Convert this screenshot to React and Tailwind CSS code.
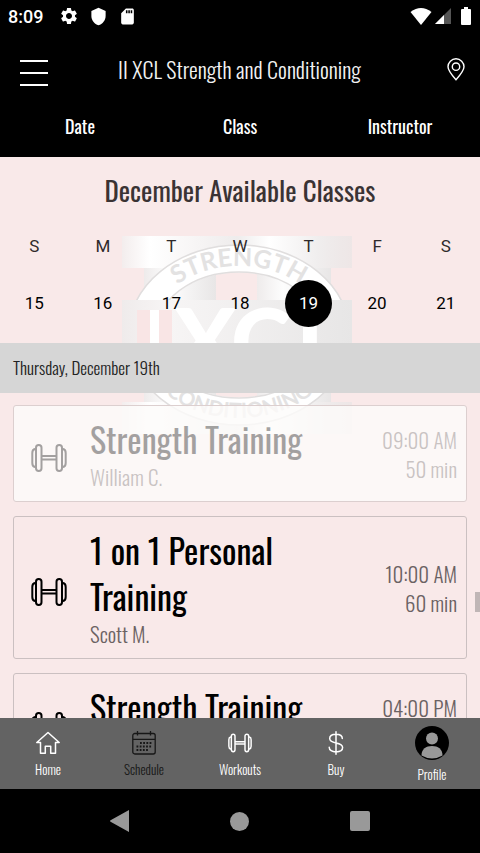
import React from 'react';
import { MdSettings, MdShield, MdSdCard } from 'react-icons/md';

const weekDays = [
    { label: 'S', date: 15 },
    { label: 'M', date: 16 },
    { label: 'T', date: 17 },
    { label: 'W', date: 18 },
    { label: 'T', date: 19, selected: true },
    { label: 'F', date: 20 },
    { label: 'S', date: 21 },
];

const classes = [
    { name: 'Strength Training', instructor: 'William C.', time: '09:00 AM', length: '50 min', past: true },
    { name: '1 on 1 Personal Training', instructor: 'Scott M.', time: '10:00 AM', length: '60 min' },
    { name: 'Strength Training', instructor: 'William C.', time: '04:00 PM', length: '50 min' },
];

const Dumbbell = ({ className, strokeWidth = 2 }) => (
    <svg viewBox="0 0 36 28" className={className} fill="none" stroke="currentColor" strokeWidth={strokeWidth} aria-hidden="true">
        <rect x="5" y="1" width="5.5" height="26" rx="2.7" />
        <rect x="25.5" y="1" width="5.5" height="26" rx="2.7" />
        <path d="M5 5H4Q1.3 5.5 1.3 9V19Q1.3 22.5 4 23H5M31 5H32Q34.7 5.5 34.7 9V19Q34.7 22.5 32 23H31M10.5 12H25.5M10.5 15.5H25.5" />
    </svg>
);

const HomeIcon = () => (
    <svg viewBox="0 0 24 24" className="w-6 h-6" fill="none" stroke="currentColor" strokeWidth="1.5" strokeLinejoin="round" aria-hidden="true">
        <path d="M12 1.5L.8 11.5H4.5V22.3H9.3V15.3H14.7V22.3H19.5V11.5H23.2Z" />
    </svg>
);

const CalendarIcon = () => (
    <svg viewBox="0 0 24 24" className="w-6 h-6" fill="none" stroke="currentColor" strokeWidth="1.3" aria-hidden="true">
        <rect x=".8" y="2.5" width="22.4" height="20.5" rx="2" />
        <path d="M1 8.3H23M5.5 0V4.5M18.5 0V4.5" />
        <path d="M8 12H20M4.5 15.5H20M4.5 19H16" strokeWidth="1.8" strokeDasharray="1.8 1.4" />
    </svg>
);

const DollarIcon = () => (
    <svg viewBox="0 0 24 24" className="w-6 h-6" fill="none" stroke="currentColor" strokeWidth="1.5" strokeLinecap="round" aria-hidden="true">
        <path d="M12 .8V23.2M18.3 7.5C18.3 4.7 15.8 3.2 12 3.2S5.7 4.8 5.7 7.5C5.7 10.3 8 11.2 12 11.9S18.6 13.7 18.6 16.6C18.6 19.4 15.9 20.9 12 20.9S5.2 19.3 5.2 16.3" />
    </svg>
);

const ProfileIcon = () => (
    <svg viewBox="0 0 34 34" className="w-[34px] h-[34px]" aria-hidden="true">
        <circle cx="17" cy="17" r="17" fill="#000" />
        <circle cx="17" cy="12.5" r="6" fill="#999" />
        <path d="M6.5 29.5C6.5 23 11 20 17 20S27.5 23 27.5 29.5Q17 35.5 6.5 29.5Z" fill="#999" />
    </svg>
);

const Watermark = () => (
    <svg viewBox="0 0 236 200" className="absolute top-[78px] left-0 right-0 mx-auto w-[236px] h-[200px]" aria-hidden="true">
        <defs>
            <linearGradient id="slab">
                <stop offset="0" stopColor="#f3eded" />
                <stop offset=".12" stopColor="#fff" />
                <stop offset=".3" stopColor="#f8f6f6" />
                <stop offset=".5" stopColor="#eeecec" />
                <stop offset=".64" stopColor="#fff" />
                <stop offset=".85" stopColor="#f0eeee" />
                <stop offset="1" stopColor="#e9e5e5" stopOpacity=".7" />
            </linearGradient>
            <linearGradient id="pillar">
                <stop offset="0" stopColor="#eeebeb" />
                <stop offset=".35" stopColor="#fdfdfd" />
                <stop offset="1" stopColor="#e8e6e6" />
            </linearGradient>
            <linearGradient id="band">
                <stop offset="0" stopColor="#efebeb" />
                <stop offset=".2" stopColor="#f7f5f5" />
                <stop offset="1" stopColor="#e7e6e6" />
            </linearGradient>
        </defs>
        <rect x="0" y="1" width="230" height="32" fill="url(#slab)" />
        <rect x="22" y="33" width="72" height="134" fill="url(#pillar)" />
        <rect x="135" y="33" width="74" height="134" fill="url(#pillar)" />
        <rect x="0" y="167" width="230" height="32" fill="url(#slab)" />
        <ellipse cx="117" cy="100" rx="97" ry="76" fill="none" stroke="#fff" strokeWidth="27" />
        <ellipse cx="117" cy="100" rx="111" ry="90" fill="none" stroke="#e0dede" strokeWidth="1.5" />
        <ellipse cx="117" cy="100" rx="84" ry="63" fill="none" stroke="#e0dede" strokeWidth="1.5" />
        <path id="arcTop" d="M27 100A90 69 0 0 1 207 100" fill="none" />
        <path id="arcBottom" d="M13 100A104 83 0 0 0 221 100" fill="none" />
        <g fill="#e3e2e2" fontFamily="Lato, sans-serif" fontWeight="700" textAnchor="middle">
            <text fontSize="25"><textPath href="#arcTop" startOffset="50%">STRENGTH</textPath></text>
            <text fontSize="21"><textPath href="#arcBottom" startOffset="50%">CONDITIONING</textPath></text>
        </g>
        <rect x="0" y="65" width="230" height="80" fill="url(#band)" />
        <path d="M15 75H28V145H15ZM37 75H50V145H37Z" fill="#f9e5e5" />
        <rect x="28" y="75" width="9" height="70" fill="#fff" />
        <g fill="#fff" fontFamily="Lato, sans-serif" fontWeight="900" fontSize="92">
            <text x="52" y="140">X</text>
            <text x="109" y="140">C</text>
            <text x="174" y="140">L</text>
        </g>
    </svg>
);

const ClassCard = ({ item }) => (
    <button
        className={`flex items-center w-full shrink-0 border rounded-[3px] py-[10px] pl-[17px] pr-[9px] text-left ${
            item.past ? 'border-[#dccfcf] bg-[#fdfbfa]/80' : 'border-[#cbc0c1]'
        }`}
    >
        <span className={`flex items-center flex-1 ${item.past ? 'opacity-35' : ''}`}>
            <Dumbbell className="w-9 h-7 mt-2 shrink-0" />
            <span className="flex-1 pl-[23px] pr-14">
                <span className="block text-[34px] leading-[46px] text-black">{item.name}</span>
                <span className="block text-[21px] leading-[29px] font-light text-[#6b6263]">{item.instructor}</span>
            </span>
            <span className="text-right text-[21px] leading-[29px] font-light text-[#6b6263] whitespace-nowrap">
                <span className="block">{item.time}</span>
                <span className="block">{item.length}</span>
            </span>
        </span>
    </button>
);

const NavItem = ({ icon, label, active }) => (
    <a href="#" className={`flex flex-col items-center gap-1 ${active ? 'text-[#171717]' : 'text-white'}`}>
        {icon}
        <span className="text-[13px] leading-5 font-light">{label}</span>
    </a>
);

const StatusBar = () => (
    <div className="flex items-center h-8 px-2 text-white">
        <span className="font-['Roboto',sans-serif] font-medium text-[18px] w-[51px]">8:09</span>
        <MdSettings size={20} />
        <MdShield size={19} className="ml-[10px]" />
        <MdSdCard size={19} className="ml-[10px]" />
        <svg viewBox="0 0 22 17" className="w-[22px] h-[17px] ml-auto" fill="currentColor" aria-hidden="true">
            <path d="M11 17L.5 4Q11-4 21.5 4Z" />
        </svg>
        <svg viewBox="0 0 16 16" className="w-4 h-4 ml-[3px]" aria-hidden="true">
            <path d="M16 0V16H0Z" fill="#555" />
            <path d="M9 7V16H0Z" fill="#fff" />
        </svg>
        <svg viewBox="0 0 10 18" className="w-[10px] h-[18px] ml-[10px] mr-[1px]" fill="currentColor" aria-hidden="true">
            <path d="M3 0H7V2H9Q10 2 10 3V17Q10 18 9 18H1Q0 18 0 17V3Q0 2 1 2H3Z" />
        </svg>
    </div>
);

export default function App() {
    return (
        <div className="flex flex-col h-screen overflow-hidden bg-[#f9e9e9] font-['Oswald','Liberation_Sans_Narrow',sans-serif]">
            <header className="bg-black text-white shrink-0">
                <StatusBar />
                <div className="flex items-center justify-between h-[74px] pl-5 pr-[15px]">
                    <button aria-label="Menu" className="flex flex-col gap-[10px] mt-2">
                        <span className="block w-7 h-[2px] bg-white" />
                        <span className="block w-7 h-[2px] bg-white" />
                        <span className="block w-7 h-[2px] bg-white" />
                    </button>
                    <h1 className="pr-4 text-[22px] leading-8 font-light text-[#f2f2f2]">II XCL Strength and Conditioning</h1>
                    <button aria-label="Location">
                        <svg viewBox="0 0 18 23" className="w-[18px] h-[23px]" fill="none" stroke="currentColor" strokeWidth="1.4">
                            <path d="M9 21.8Q1 12.8 1 8.8A8 8 0 0 1 17 8.8Q17 12.8 9 21.8Z" />
                            <circle cx="9" cy="8.7" r="3.7" />
                        </svg>
                    </button>
                </div>
                <div className="grid grid-cols-3 h-[51px] pb-[10px] text-[18px]">
                    <button>Date</button>
                    <button>Class</button>
                    <button>Instructor</button>
                </div>
            </header>

            <main className="relative flex-1 min-h-0 overflow-hidden">
                <Watermark />
                <div className="relative">
                    <section className="h-[186px] pt-3">
                        <h2 className="text-center text-[27px] leading-[42px] text-[#3a3334]">December Available Classes</h2>
                        <div className="grid grid-cols-7 pt-[23px] font-['Roboto',sans-serif] text-[17px]">
                            {weekDays.map((day) => (
                                <div key={day.date} className="flex flex-col items-center gap-[22px]">
                                    <span className="leading-6 text-[#2f2a2b]">{day.label}</span>
                                    <button
                                        className={`w-[47px] h-[47px] rounded-full ${day.selected ? 'bg-black text-white' : 'text-black'}`}
                                    >
                                        {day.date}
                                    </button>
                                </div>
                            ))}
                        </div>
                    </section>
                    <h3 className="h-[50px] px-[13px] bg-[#d6d6d6] text-[17px] leading-[50px] font-light text-[#222]">Thursday, December 19th</h3>
                    <div className="flex flex-col gap-[14px] px-[13px] pt-3">
                        {classes.map((item) => (
                            <ClassCard key={item.time} item={item} />
                        ))}
                    </div>
                </div>
                {/* scroll thumb */}
                <div className="absolute right-0 top-[435px] w-[5px] h-5 bg-[#c0b6b6]" />
            </main>

            <nav className="grid grid-cols-5 shrink-0 h-[71px] bg-[#636363]">
                <div className="pt-[13px]"><NavItem icon={<HomeIcon />} label="Home" /></div>
                <div className="pt-[13px]"><NavItem icon={<CalendarIcon />} label="Schedule" active /></div>
                <div className="pt-[13px]"><NavItem icon={<Dumbbell className="w-6 h-6" strokeWidth={2.2} />} label="Workouts" /></div>
                <div className="pt-[13px]"><NavItem icon={<DollarIcon />} label="Buy" /></div>
                <div className="pt-2"><NavItem icon={<ProfileIcon />} label="Profile" /></div>
            </nav>

            <div className="flex items-center justify-center gap-[101px] shrink-0 h-16 bg-black text-[#999]">
                <button aria-label="Back">
                    <svg viewBox="0 0 19 22" className="w-[19px] h-[22px]" fill="currentColor"><path d="M19 0V22L1 12Q-1 11 1 10Z" /></svg>
                </button>
                <button aria-label="Home screen" className="w-[19px] h-[19px] rounded-full bg-[#999]" />
                <button aria-label="Recent apps" className="w-5 h-5 rounded-[2px] bg-[#999]" />
            </div>
        </div>
    );
}
